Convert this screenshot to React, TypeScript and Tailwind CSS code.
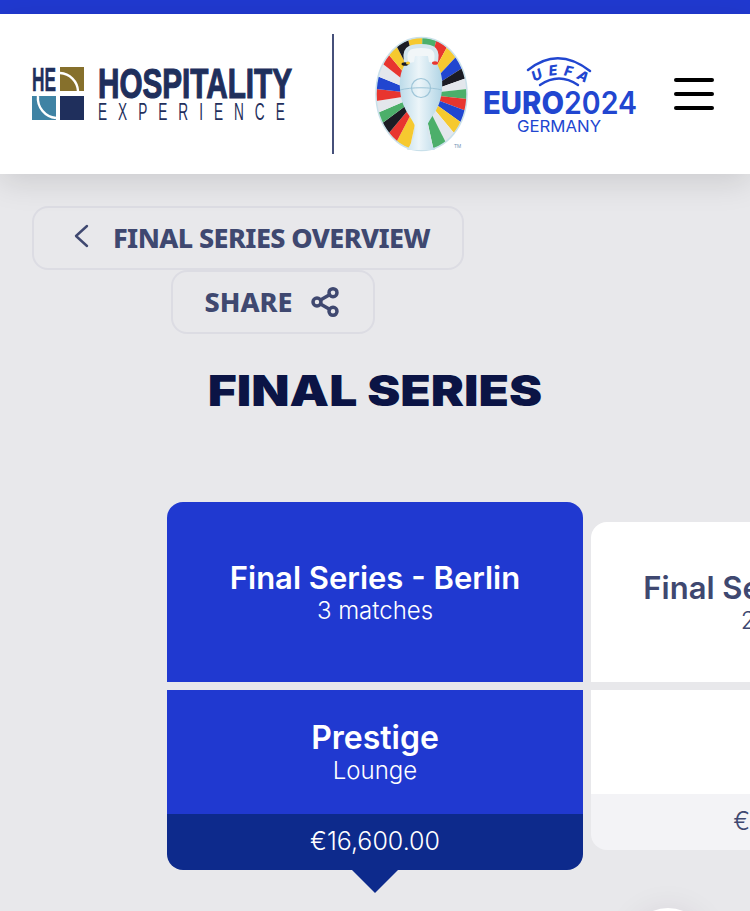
import React from 'react';
import { Share2 } from 'lucide-react';

const navy = '#1f2f5c';
const blue = '#2146d0';

const Y = '#f6c92f';
const G = '#4caf6a';
const R = '#e8352f';
const B = '#2146d0';
const K = '#1b1c24';
const W = '#e3e7ec';

// start angle of each stripe, clockwise from the top of the ellipse
const stripes: [number, string][] = [
  [-17, Y], [1, G], [19, R], [34, Y], [49, B], [63, K], [74, W], [85, G], [95, R], [107, B], [120, Y], [134, W], [148, G],
  [165, '#d8e6ee'], [195, Y], [213, R], [226, K], [239, G], [251, W], [263, R], [275, B], [288, W], [302, R], [314, Y], [327, K],
];

const wedge = (i: number) => {
  const from = (stripes[i][0] * Math.PI) / 180;
  const nextDeg = i === stripes.length - 1 ? 343 : stripes[i + 1][0];
  const to = (nextDeg * Math.PI) / 180;
  const cx = 46.5;
  const cy = 59;
  const rx = 45.5;
  const ry = 56.5;
  return `M${cx} ${cy} L${cx + rx * Math.sin(from)} ${cy - ry * Math.cos(from)} A${rx} ${ry} 0 0 1 ${cx + rx * Math.sin(to)} ${cy - ry * Math.cos(to)} Z`;
};

const HospitalityLogo = () => (
  <svg width="262" height="60" viewBox="32 66 262 60" className="shrink-0">
    <text x="32" y="93" fontFamily="'Liberation Sans', sans-serif" fontWeight="700" fontSize="33" textLength="24" lengthAdjust="spacingAndGlyphs" fill={navy} stroke={navy} strokeWidth="0.5">HE</text>
    <rect x="60" y="69" width="24" height="24" fill="#86702c" />
    <rect x="32" y="98" width="24" height="24" fill="#3f83a4" />
    <rect x="60" y="98" width="24" height="24" fill={navy} />
    <path d="M60 75 A19 19 0 0 1 78 93" fill="none" stroke="#fff" strokeWidth="2.4" />
    <path d="M38 98 A20 20 0 0 0 56 120" fill="none" stroke="#fff" strokeWidth="2.4" />
    <text x="98" y="100" fontFamily="'Liberation Sans', sans-serif" fontWeight="700" fontSize="43" textLength="194" lengthAdjust="spacingAndGlyphs" fill={navy} stroke={navy} strokeWidth="1.2">HOSPITALITY</text>
    <text transform="scale(0.58 1)" x="169" y="122" fontFamily="'Liberation Sans', sans-serif" fontSize="23.5" textLength="322" lengthAdjust="spacing" fill={navy}>EXPERIENCE</text>
  </svg>
);

const Trophy = () => (
  <svg width="93" height="118" viewBox="0 0 93 118" className="shrink-0">
    <defs>
      <linearGradient id="cup" x1="0" y1="0" x2="1" y2="0">
        <stop offset="0" stopColor="#bcdbe9" />
        <stop offset="0.45" stopColor="#ecf5f9" />
        <stop offset="1" stopColor="#b0d4e5" />
      </linearGradient>
    </defs>
    {stripes.map((s, i) => (
      <path key={i} d={wedge(i)} fill={s[1]} />
    ))}
    <ellipse cx="46.5" cy="59" rx="45.5" ry="56.5" fill="none" stroke="#c9e0ea" strokeWidth="1.5" />
    <path d="M32 30 C27 14 34 11 46 11 C58 11 65 14 60 30 Z" fill="#f1f6f8" />
    <path d="M32 30 C27 14 34 11 46 11 C58 11 65 14 60 30" fill="none" stroke="#d3e5ed" strokeWidth="4" />
    <path d="M40 21 L53 21 L54 27 L62 29 C66 36 68 44 67 54 C66 74 55 82 52 91 C51 100 55 108 60 115 L32 115 C37 108 41 100 40 91 C37 82 26 74 25 54 C24 44 26 36 30 29 L39 27 Z" fill="url(#cup)" />
    <ellipse cx="30" cy="29" rx="3.5" ry="1.8" fill={K} />
    <ellipse cx="33" cy="28" rx="2" ry="1.5" fill={Y} />
    <ellipse cx="60" cy="28" rx="3" ry="1.8" fill={R} />
    <circle cx="46" cy="53" r="9.5" fill="none" stroke="#9ec5d8" strokeWidth="1.2" />
    <path d="M25 55 C36 52 56 52 67 55" fill="none" stroke="#9ec5d8" strokeWidth="1" />
    <text x="79" y="113" fontFamily="'Liberation Sans', sans-serif" fontSize="5" fill="#6f93b5">TM</text>
  </svg>
);

const EuroLogo = () => (
  <svg width="156" height="84" viewBox="482 52 156 84" className="shrink-0">
    <defs>
      <path id="uefa-arc" d="M531 84 Q558 66 587 84" />
    </defs>
    <path d="M528 70 Q558 46 590 71" fill="none" stroke={blue} strokeWidth="2.4" strokeLinecap="round" />
    <path d="M540 85 Q559 72 578 85" fill="none" stroke={blue} strokeWidth="2.4" strokeLinecap="round" />
    <text fontFamily="Inter, sans-serif" fontWeight="800" fontStyle="italic" fontSize="14" fill={blue}>
      <textPath href="#uefa-arc" startOffset="4" textLength="54">UEFA</textPath>
    </text>
    <text x="483" y="114" fontFamily="Inter, sans-serif" fontWeight="800" fontSize="31" textLength="81" lengthAdjust="spacingAndGlyphs" fill={blue}>EURO</text>
    <text x="564" y="114" fontFamily="Inter, sans-serif" fontWeight="600" fontSize="31" textLength="73" lengthAdjust="spacingAndGlyphs" fill={blue}>2024</text>
    <text x="517" y="132" fontFamily="Inter, sans-serif" fontSize="16" textLength="84" lengthAdjust="spacingAndGlyphs" fill={blue}>GERMANY</text>
  </svg>
);

export default function App() {
  return (
    <div className="relative w-[750px] h-[911px] overflow-hidden bg-[#e8e8eb]">
      <div className="h-[14px] bg-[#2039d0]"></div>
      <header className="relative z-10 h-[160px] bg-white flex items-center pl-8 pr-9 shadow-[0_8px_30px_rgba(0,0,0,0.12)]">
        <HospitalityLogo />
        <div className="ml-[38px] w-[2px] h-[120px] bg-[#46507a]"></div>
        <div className="ml-[41px]"><Trophy /></div>
        <div className="ml-[14px]"><EuroLogo /></div>
        <button className="ml-auto w-10 flex flex-col gap-[10px]" aria-label="Menu">
          <span className="h-1 bg-black rounded-full"></span>
          <span className="h-1 bg-black rounded-full"></span>
          <span className="h-1 bg-black rounded-full"></span>
        </button>
      </header>

      <div className="pt-8 pl-8 text-[#3f4870] font-['Noto_Sans',sans-serif] font-extrabold">
        <a href="#" className="flex items-center w-[432px] h-16 pl-[39px] border-2 border-[#dcdce3] rounded-2xl text-[27px] tracking-[-0.6px]">
          <svg width="16" height="24" viewBox="0 0 16 24" className="shrink-0 -mt-1">
            <path d="M14 2 L3 12 L14 22" fill="none" stroke="#3f4870" strokeWidth="2.4" strokeLinecap="round" strokeLinejoin="round" />
          </svg>
          <span className="ml-[24px]">FINAL SERIES OVERVIEW</span>
        </a>
        <a href="#" className="flex items-center justify-center gap-[17px] w-[204px] h-16 ml-[139px] border-2 border-[#dcdce3] rounded-2xl text-[27px]">
          SHARE
          <Share2 size={32} strokeWidth={2.6} />
        </a>
      </div>

      <h1 className="mt-[28px] text-center text-[#0b1445] font-['Inter',sans-serif] font-black text-[42px] leading-[58px] scale-x-[1.185]">FINAL SERIES</h1>

      <div className="mt-[82px] ml-[167px] flex gap-2 items-start font-['Inter',sans-serif]">
        <div className="relative w-[416px] shrink-0 text-white text-center">
          <div className="h-[180px] pt-[2px] bg-[#2039d0] rounded-t-2xl flex flex-col items-center justify-center">
            <div className="text-[31px] leading-9 font-semibold">Final Series - Berlin</div>
            <div className="text-[24px] leading-[30px] font-light">3 matches</div>
          </div>
          <div className="mt-2 h-[124px] pt-[2px] bg-[#2039d0] flex flex-col items-center justify-center">
            <div className="text-[32px] leading-9 font-semibold">Prestige</div>
            <div className="text-[24px] leading-[30px] font-light">Lounge</div>
          </div>
          <div className="h-14 bg-[#0d2a8c] rounded-b-2xl flex items-center justify-center text-[25px] font-light">€16,600.00</div>
          <div className="absolute left-1/2 -translate-x-1/2 top-full w-0 h-0 border-x-[23px] border-x-transparent border-t-[23px] border-t-[#0d2a8c]"></div>
        </div>
        <div className="mt-5 w-[416px] shrink-0 text-[#3f4870] text-center">
          <div className="h-[160px] pt-[2px] bg-white rounded-t-2xl flex flex-col items-center justify-center">
            <div className="pl-1 text-[31px] leading-9 font-semibold">Final Series - Munich</div>
            <div className="text-[24px] leading-[30px] font-light">2 matches</div>
          </div>
          <div className="mt-2 h-[104px] bg-white"></div>
          <div className="h-14 bg-[#f3f3f6] rounded-b-2xl flex items-center justify-center text-[25px] font-light">€12,900.00</div>
        </div>
      </div>

      <div className="absolute left-[628px] top-[908px] w-[80px] h-[80px] rounded-full bg-white shadow-[0_0_30px_rgba(60,30,60,0.08)]"></div>
    </div>
  );
}
